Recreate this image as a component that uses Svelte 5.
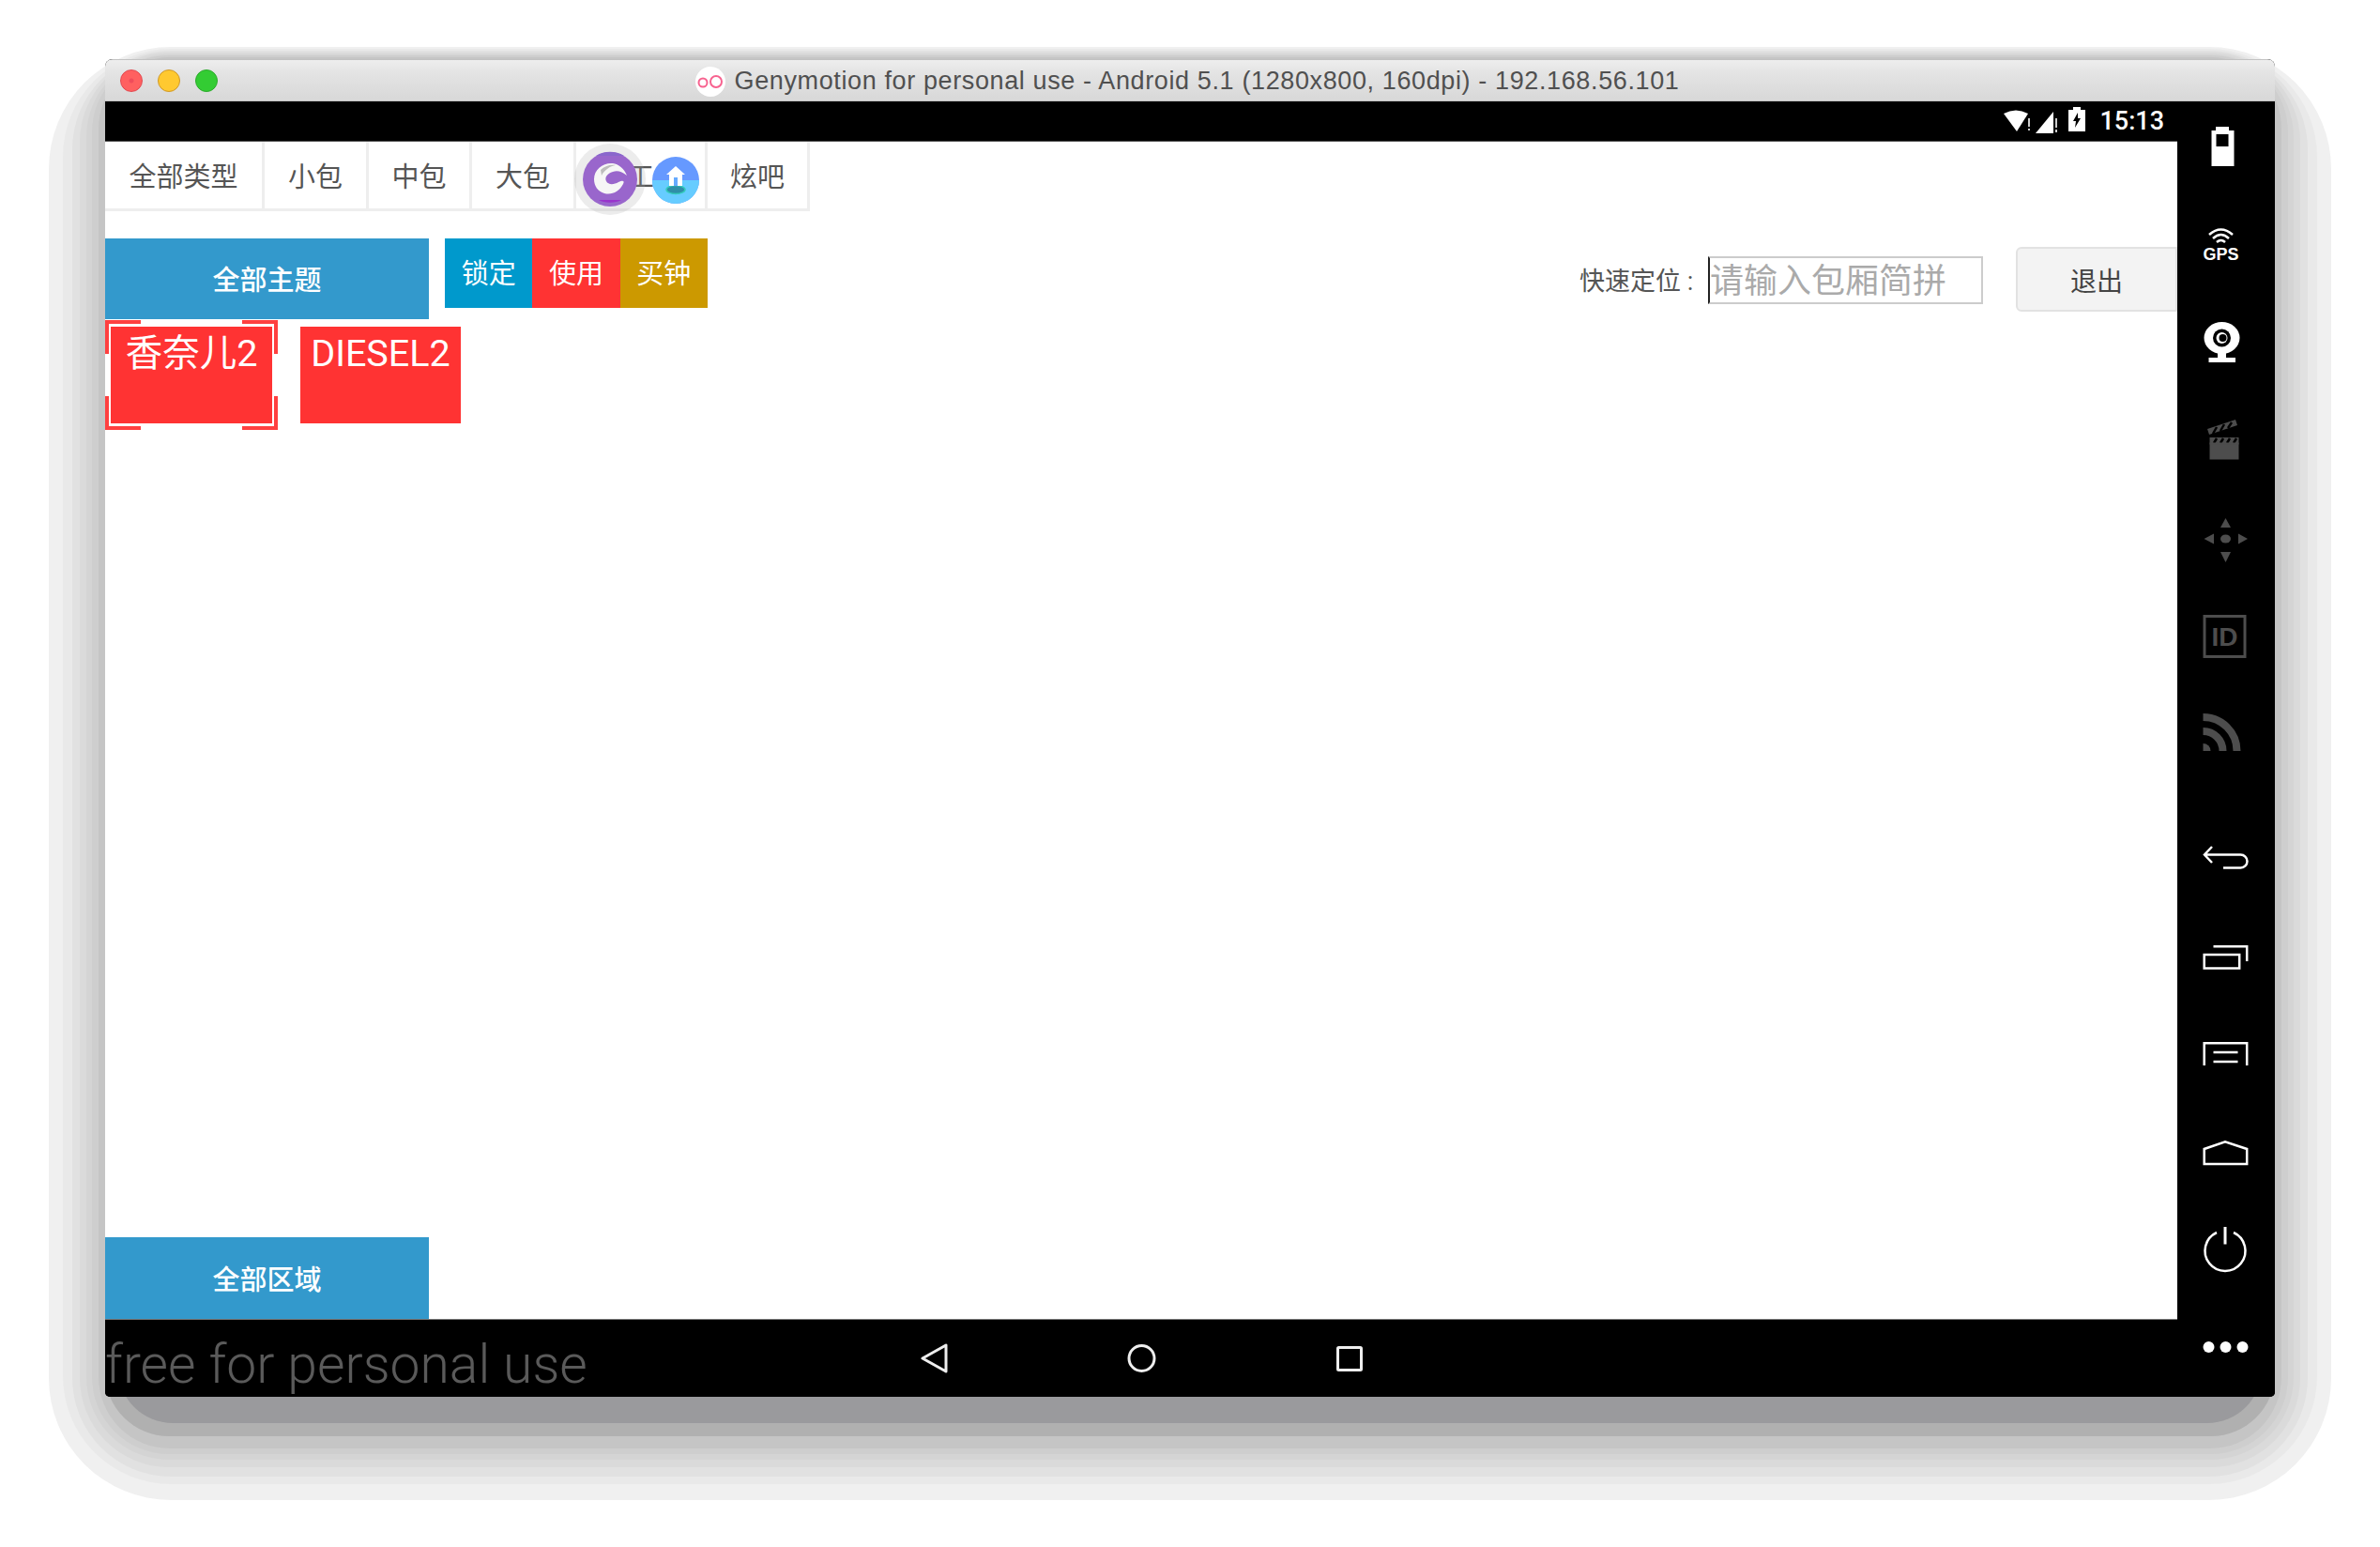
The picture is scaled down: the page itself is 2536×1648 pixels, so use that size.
<script>
  const shadowLayers = [
    { l: 52, r: 2484, t: 50, b: 1598, rad: 130, c: '#f0f0f0' },
    { l: 67, r: 2469, t: 52, b: 1581, rad: 115, c: '#e9e9e9' },
    { l: 77, r: 2459, t: 54, b: 1573, rad: 105, c: '#e1e1e1' },
    { l: 85, r: 2451, t: 56, b: 1563, rad: 95, c: '#dadada' },
    { l: 92, r: 2444, t: 58, b: 1555, rad: 88, c: '#d4d4d4' },
    { l: 98, r: 2438, t: 59, b: 1549, rad: 82, c: '#cecece' },
    { l: 105, r: 2431, t: 61, b: 1543, rad: 76, c: '#c5c5c5' },
    { l: 112, r: 2424, t: 63, b: 1530, rad: 68, c: '#b0b0b0' },
    { l: 126, r: 2410, t: 70, b: 1516, rad: 58, c: '#9a9a9d' }
  ];
  const tabs = [
    { label: '全部类型', w: 170 },
    { label: '小包', w: 111 },
    { label: '中包', w: 110 },
    { label: '大包', w: 111 },
    { label: '工', w: 140 },
    { label: '炫吧', w: 109 }
  ];
  const actions = [
    { label: '锁定', cls: 'lock' },
    { label: '使用', cls: 'use' },
    { label: '买钟', cls: 'buy' }
  ];
</script>

<div class="page">
  {#each shadowLayers as s}
    <div class="shadow" style="left:{s.l}px;width:{s.r - s.l}px;top:{s.t}px;height:{s.b - s.t}px;border-radius:{s.rad}px;background:{s.c}"></div>
  {/each}

  <div class="window">
    <header class="titlebar">
      <div class="lights">
        <span class="light red"></span>
        <span class="light yellow"></span>
        <span class="light green"></span>
      </div>
      <div class="title">
        <svg class="logo" width="32" height="32" viewBox="0 0 32 32">
          <circle cx="16" cy="16" r="16" fill="#fff" />
          <circle cx="8" cy="17" r="4.5" fill="none" stroke="#f7628f" stroke-width="2" />
          <circle cx="22" cy="16" r="6" fill="none" stroke="#f7628f" stroke-width="2" />
        </svg>
        <span>Genymotion for personal use - Android 5.1 (1280x800, 160dpi) - 192.168.56.101</span>
      </div>
      <div></div>
    </header>

    <div class="device">
      <div class="main">
        <div class="statusbar">
          <svg width="31" height="24" viewBox="0 0 31 24">
            <path d="M0 4Q13 -3 26 4L14 23Z" fill="#fff" />
            <rect x="26" y="9" width="2" height="9" fill="#ccc" />
            <rect x="26" y="20" width="2" height="2" fill="#ccc" />
          </svg>
          <svg width="25" height="25" viewBox="0 0 25 25">
            <path d="M0 25L19 2V25Z" fill="#fff" />
            <rect x="21" y="9" width="2" height="10" fill="#ccc" />
            <rect x="21" y="21" width="2" height="3" fill="#ccc" />
          </svg>
          <svg class="bat" width="18" height="26" viewBox="0 0 18 26">
            <path d="M5 0H13V3H18V26H0V3H5Z" fill="#fff" />
            <path d="M10 6L5 15H8L7 22L13 12H10Z" fill="#000" />
          </svg>
          <span class="clock">15:13</span>
        </div>

        <main class="screen">
          <nav class="tabs">
            {#each tabs as t}
              <div class="tab" style="width:{t.w}px">{t.label}</div>
            {/each}
            <svg class="float purple" width="80" height="80" viewBox="0 0 80 80">
              <circle cx="40" cy="40" r="38" fill="#aaa" opacity="0.22" />
              <circle cx="40" cy="40" r="29" fill="#9966cc" />
              <path d="M28 62A15 7 0 0 0 52 62Z" fill="#9933cc" />
              <path d="M25 15A29 29 0 0 1 55 15Z" fill="#8a66cc" />
              <path d="M23 40C23 29 33 22 43 23C49 24 55 28 58 36C53 32 48 30 43 32C37 34 34 38 36 42C38 46 44 46 49 43C53 41 56 41 54 45C50 53 42 57 34 55C27 53 23 47 23 40Z" fill="#f6f6f6" />
              <path d="M30 30C34 26 40 24 46 25C40 26 34 30 31 36Z" fill="#bdbdbd" />
            </svg>
            <svg class="float home" width="56" height="56" viewBox="0 0 56 56">
              <circle cx="28" cy="28" r="25" fill="#6699ff" />
              <path d="M3 28A25 25 0 0 0 53 28Z" fill="#66ccff" />
              <ellipse cx="28" cy="38" rx="10" ry="4.5" fill="#2f8fa8" stroke="#33ccbb" stroke-width="1.5" />
              <path d="M28 13L38 22H35V34H21V22H18Z" fill="#fff" />
              <rect x="26" y="25" width="4" height="9" fill="#66aaff" />
            </svg>
          </nav>

          <div class="controls">
            <div class="panel">全部主题</div>
            <div class="actions">
              {#each actions as a}
                <div class="action {a.cls}">{a.label}</div>
              {/each}
            </div>
            <div class="search">
              <label for="q">快速定位 :</label>
              <input id="q" placeholder="请输入包厢简拼" />
              <button class="exit">退出</button>
            </div>
          </div>

          <div class="cards">
            <div class="card selected">
              香奈儿2
              <i class="c tl"></i><i class="c tr"></i><i class="c bl"></i><i class="c br"></i>
            </div>
            <div class="card">DIESEL2</div>
          </div>

          <div class="panel area">全部区域</div>
        </main>

        <footer class="navbar">
          <span class="free">free for personal use</span>
          <svg class="back" width="29" height="32" viewBox="0 0 29 32">
            <path d="M27 2V30L2 16Z" fill="none" stroke="#eee" stroke-width="3" stroke-linejoin="round" />
          </svg>
          <svg class="home-b" width="31" height="32" viewBox="0 0 31 32">
            <circle cx="15.5" cy="16" r="13.5" fill="none" stroke="#eee" stroke-width="3" />
          </svg>
          <svg class="rec" width="28" height="27" viewBox="0 0 28 27">
            <rect x="1.5" y="1.5" width="25" height="24" rx="1" fill="none" stroke="#eee" stroke-width="3" />
          </svg>
        </footer>
      </div>

      <aside class="side">
        <div class="group">
          <svg viewBox="0 0 48 48">
            <path d="M14 3H28V7H33.5V45H9.5V7H14Z" fill="#fff" />
            <rect x="14.5" y="11" width="13" height="13" fill="#000" />
          </svg>
          <svg viewBox="0 0 48 48">
            <g fill="none" stroke="#fff" stroke-width="2.5">
              <path d="M7 14Q19.5 3 32 14" />
              <path d="M11 18Q19.5 10 28 18" />
              <path d="M15 22Q19.5 18 24 22" />
            </g>
            <text x="19.5" y="41" class="gps">GPS</text>
          </svg>
          <svg viewBox="0 0 48 48">
            <ellipse cx="20.5" cy="20" rx="19" ry="17" fill="#fff" />
            <path d="M16 34H25V41H35V46H6.5V41H16Z" fill="#fff" />
            <circle cx="20.5" cy="20" r="9.5" fill="#000" />
            <circle cx="20.5" cy="20" r="6" fill="#fff" />
            <circle cx="21.5" cy="20" r="4" fill="#000" />
          </svg>
          <svg viewBox="0 0 48 48">
            <rect x="7.5" y="22" width="31" height="23.5" fill="#4d4d4d" />
            <g stroke="#000" stroke-width="2.5">
              <path d="M12 28L15 23M19 28L22 23M26 28L29 23M33 28L36 23" />
            </g>
            <rect x="7.5" y="27.5" width="31" height="2" fill="#4d4d4d" />
            <path d="M5 13L35 3L37 9L7 19Z" fill="#4d4d4d" />
            <path d="M11 18L15 11M19 15L23 8M27 12L31 6" stroke="#000" stroke-width="2.5" />
          </svg>
          <svg viewBox="0 0 48 48">
            <g fill="#4d4d4d">
              <path d="M24.5 4L30 14H19Z" />
              <path d="M24.5 51L30 40H19Z" />
              <path d="M1.5 26L12 20.5V31.5Z" />
              <path d="M48 26L38 20.5V31.5Z" />
              <ellipse cx="24.5" cy="26" rx="5.5" ry="4.5" />
            </g>
          </svg>
          <svg viewBox="0 0 48 48">
            <rect x="2" y="4.5" width="43" height="43" fill="none" stroke="#4d4d4d" stroke-width="3" />
            <text x="23.5" y="36" class="idtext">ID</text>
          </svg>
          <svg viewBox="0 0 48 48">
            <g fill="none" stroke="#4d4d4d" stroke-width="8">
              <path d="M0.5 8A36 36 0 0 1 36.5 44" />
              <path d="M0.5 23A21 21 0 0 1 21.5 44" />
            </g>
            <path d="M0.5 36A8 8 0 0 1 8.5 44H0.5Z" fill="#4d4d4d" />
          </svg>
        </div>

        <div class="group second">
          <svg viewBox="0 0 48 48">
            <path d="M10 12L2 20.5L10 29M2 20.5H40.5A7 7 0 0 1 40.5 34.5H22" fill="none" stroke="#fff" stroke-width="2.5" />
          </svg>
          <svg viewBox="0 0 48 48">
            <g fill="none" stroke="#fff" stroke-width="2.5">
              <path d="M11.5 14.2H47.2V30" />
              <rect x="1.7" y="23" width="37.5" height="14.5" />
            </g>
          </svg>
          <svg viewBox="0 0 48 48">
            <g fill="none" stroke="#fff" stroke-width="2.5">
              <path d="M1.7 37V13.2H47.2V37" />
              <path d="M11.5 23H37.5M11.5 33H37.5" />
            </g>
          </svg>
          <svg viewBox="0 0 48 48">
            <path d="M1.7 38V22L24 14.3L47.2 22V38Z" fill="none" stroke="#fff" stroke-width="2.5" />
          </svg>
          <svg viewBox="0 0 48 48">
            <g fill="none" stroke="#fff" stroke-width="2.5">
              <path d="M15 7A21.5 21.5 0 1 0 33 7" />
              <path d="M24 1V19.5" stroke-width="3" />
            </g>
          </svg>
          <svg viewBox="0 0 48 48">
            <g fill="#fff">
              <circle cx="6.5" cy="25" r="6" />
              <circle cx="24.5" cy="25" r="6" />
              <circle cx="42.5" cy="25" r="6" />
            </g>
          </svg>
        </div>
      </aside>
    </div>
  </div>
</div>

<style>
  :global(body) {
    margin: 0;
    background: #fff;
  }
  * {
    box-sizing: border-box;
  }
  .page {
    position: relative;
    width: 2536px;
    height: 1648px;
    padding: 63px 112px 0;
    overflow: hidden;
    font-family: "Roboto", "Noto Sans CJK SC", sans-serif;
  }
  .shadow {
    position: absolute;
  }
  .window {
    position: relative;
    width: 2312px;
    height: 1425px;
    display: flex;
    flex-direction: column;
    border-radius: 8px 8px 5px 5px;
    overflow: hidden;
    background: #000;
  }
  .titlebar {
    flex: 0 0 45px;
    display: grid;
    grid-template-columns: 1fr auto 1fr;
    align-items: center;
    background: linear-gradient(#eeeeee, #e4e4e4 30%, #d8d8d8);
    border-top: 1px solid #c2c2c2;
    border-bottom: 1px solid #c6c6c6;
  }
  .lights {
    display: flex;
    gap: 16px;
    padding-left: 16px;
  }
  .light {
    width: 24px;
    height: 24px;
    border-radius: 50%;
    border: 1px solid transparent;
  }
  .red {
    background: radial-gradient(circle, #f04c5a 0 2px, #ff6060 3px);
    border-color: #e2484f;
  }
  .yellow {
    background: #ffc930;
    border-color: #cf982a;
  }
  .green {
    background: #33cc33;
    border-color: #2cab2c;
  }
  .title {
    display: flex;
    align-items: center;
    gap: 10px;
    font-family: "Liberation Sans", sans-serif;
    font-size: 27px;
    letter-spacing: 0.62px;
    color: #505050;
    white-space: nowrap;
    margin-left: -6px;
    padding-top: 2px;
  }
  .device {
    flex: 1;
    display: flex;
    min-height: 0;
  }
  .main {
    width: 2208px;
    display: flex;
    flex-direction: column;
  }
  .statusbar {
    flex: 0 0 43px;
    display: flex;
    justify-content: flex-end;
    align-items: center;
    padding-right: 14px;
    gap: 3px;
    background: #000;
    border-bottom: 1px solid #555;
  }
  .bat {
    margin: -5px 0 0 7px;
  }
  .clock {
    color: #fff;
    font-size: 27px;
    font-weight: 500;
    margin-left: 12px;
    line-height: 1;
  }
  .screen {
    flex: 1;
    background: #fff;
    display: flex;
    flex-direction: column;
    min-height: 0;
  }
  .tabs {
    position: relative;
    display: flex;
    height: 74px;
    flex: none;
  }
  .tab {
    display: flex;
    align-items: center;
    justify-content: center;
    border-right: 3px solid #eee;
    border-bottom: 3px solid #eee;
    color: #555;
    font-size: 29px;
    padding-bottom: 2px;
  }
  .float {
    position: absolute;
  }
  .purple {
    left: 498px;
    top: 0;
  }
  .home {
    left: 580px;
    top: 13px;
  }
  .controls {
    display: flex;
    align-items: flex-start;
    margin-top: 29px;
    height: 86px;
    flex: none;
  }
  .panel {
    flex: none;
    width: 345px;
    height: 86px;
    display: flex;
    align-items: center;
    justify-content: center;
    background: #3399cc;
    color: #fff;
    font-size: 29px;
    font-weight: 500;
    padding-bottom: 2px;
  }
  .actions {
    display: flex;
    margin-left: 17px;
  }
  .action {
    width: 93.3px;
    height: 74px;
    display: flex;
    align-items: center;
    justify-content: center;
    color: #fff;
    font-size: 29px;
    padding-bottom: 5px;
  }
  .lock { background: #0099cc; }
  .use { background: #ff3333; }
  .buy { background: #cc9900; }
  .search {
    margin-left: auto;
    margin-top: 9px;
    display: flex;
    align-items: center;
    height: 69px;
  }
  label {
    font-size: 27px;
    color: #555;
    width: 137px;
    white-space: nowrap;
    padding-top: 0;
  }
  input {
    width: 293px;
    height: 51px;
    border: 2px solid #ccc;
    border-left: 2px solid #222;
    padding: 4px 0 0;
    margin-top: 1px;
    font-family: "Roboto", "Noto Sans CJK SC", sans-serif;
    font-size: 36px;
    border-radius: 0;
    outline: none;
    background: #fff;
  }
  input::placeholder {
    color: #aaa;
    opacity: 1;
  }
  .exit {
    width: 172px;
    height: 69px;
    margin-left: 35px;
    border: 2px solid #e2e2e2;
    border-radius: 6px 0 0 6px;
    background: #f3f3f3;
    color: #444;
    font-family: "Roboto", "Noto Sans CJK SC", sans-serif;
    font-size: 28px;
    padding: 0;
  }
  .cards {
    display: flex;
    gap: 30px;
    margin-top: 8px;
    padding-left: 6px;
    flex: none;
  }
  .card {
    position: relative;
    width: 171px;
    height: 103px;
    background: #ff3333;
    color: #fff;
    font-size: 39.5px;
    line-height: 48px;
    text-align: center;
    padding-top: 5px;
    white-space: nowrap;
  }
  .selected {
    width: 172px;
  }
  .c {
    position: absolute;
    width: 38px;
    height: 36px;
    border: 0 solid #ff4040;
  }
  .tl { left: -6px; top: -7px; border-width: 4px 0 0 4px; }
  .tr { right: -6px; top: -7px; border-width: 4px 4px 0 0; }
  .bl { left: -6px; bottom: -7px; border-width: 0 0 4px 4px; }
  .br { right: -6px; bottom: -7px; border-width: 0 4px 4px 0; }
  .area {
    margin-top: auto;
    height: 87px;
  }
  .navbar {
    flex: 0 0 83px;
    display: flex;
    align-items: center;
    background: #000;
    border-top: 1px solid #777;
  }
  .free {
    width: 518px;
    flex: none;
    font-family: "Roboto", sans-serif;
    font-weight: 300;
    font-size: 57px;
    color: #5a5a5a;
    white-space: nowrap;
    line-height: 1;
    margin-top: 12px;
  }
  .back {
    margin-left: 351px;
  }
  .home-b {
    margin-left: 191px;
  }
  .rec {
    margin-left: 192px;
  }
  .side {
    width: 104px;
    flex: none;
    padding: 24px 3px 0 0;
    display: flex;
    flex-direction: column;
    align-items: center;
    background: #000;
  }
  .group {
    display: flex;
    flex-direction: column;
    gap: 56px;
  }
  .second {
    margin-top: 86px;
  }
  .group svg {
    display: block;
    width: 48px;
    height: 48px;
    overflow: visible;
  }
  .gps {
    font-family: "Liberation Sans", sans-serif;
    font-weight: 700;
    font-size: 18px;
    fill: #fff;
    text-anchor: middle;
  }
  .idtext {
    font-family: "Liberation Sans", sans-serif;
    font-weight: 700;
    font-size: 28px;
    fill: #4d4d4d;
    text-anchor: middle;
  }
</style>
